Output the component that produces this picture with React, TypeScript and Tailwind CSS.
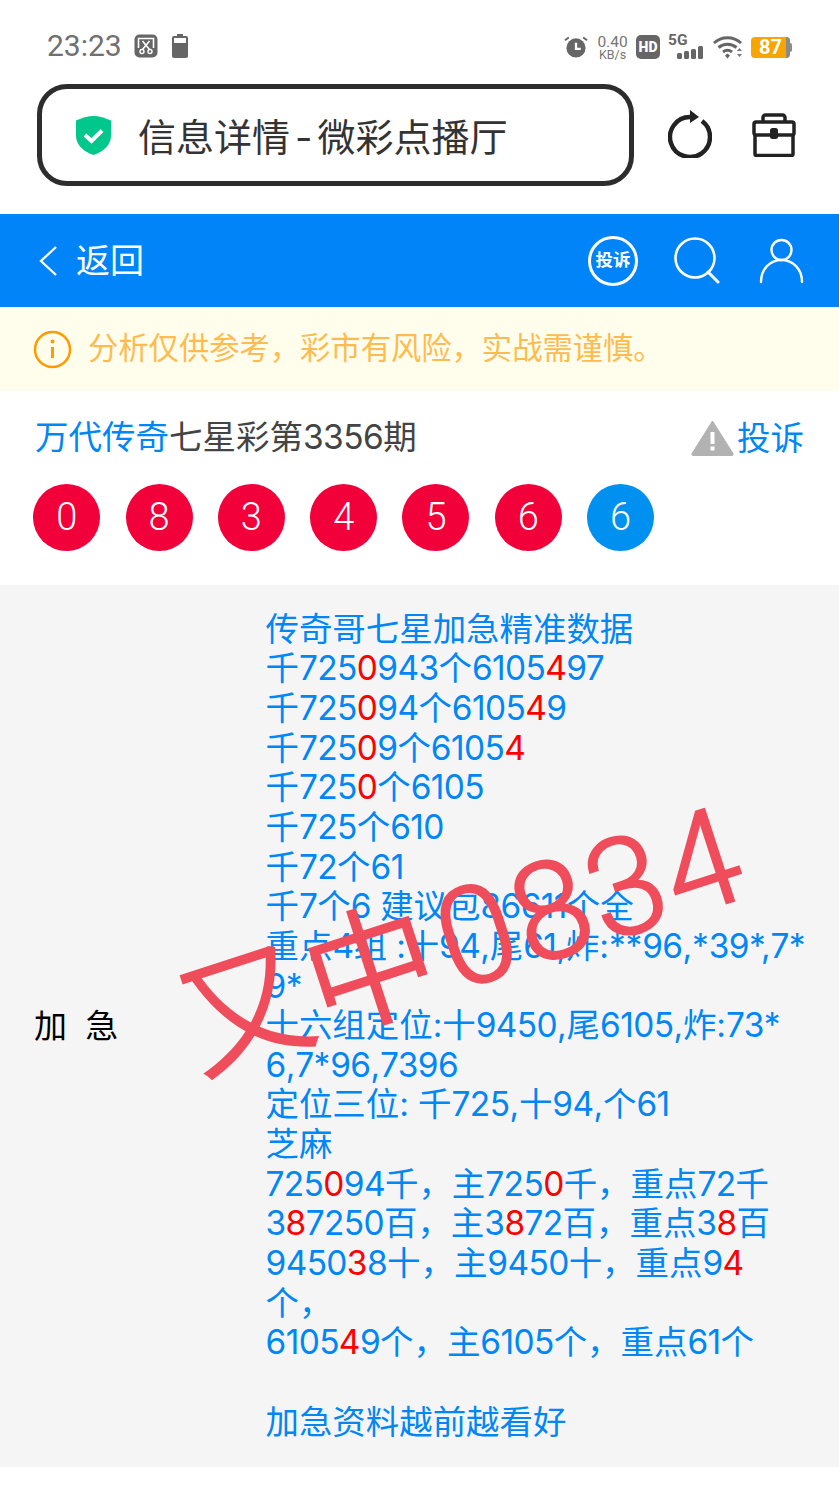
import React from "react";

const stack = "font-['Roboto','Noto_Sans_CJK_SC',sans-serif]";

function T({ s }: { s: string }) {
  const parts = s.split(/(\[[^\]]\]|[0-9]+|[:,*. ]+)/).filter(Boolean);
  return (
    <>
      {parts.map((p, i) =>
        p.startsWith("[") ? (
          <span key={i} className="font-['Inter',sans-serif] leading-none tracking-[-0.6px] text-[#ff0000]">{p[1]}</span>
        ) : /^[0-9]+$/.test(p) ? (
          <span key={i} className="font-['Inter',sans-serif] leading-none tracking-[-0.6px]">{p}</span>
        ) : /^[:,*. ]+$/.test(p) ? (
          <span key={i} className="font-['Inter',sans-serif] leading-none tracking-[-0.1px]">{p}</span>
        ) : (
          <span key={i}>{p}</span>
        )
      )}
    </>
  );
}

function Ball({ n, blue }: { n: string; blue?: boolean }) {
  return (
    <div className={`w-[67px] h-[67px] rounded-full flex items-center justify-center text-white text-[38px] font-light ${blue ? "bg-[#0091f0]" : "bg-[#f20039]"}`}>
      {n}
    </div>
  );
}

const lines = [
  "传奇哥七星加急精准数据",
  "千725[0]943个6105[4]97",
  "千725[0]94个6105[4]9",
  "千725[0]9个6105[4]",
  "千725[0]个6105",
  "千725个610",
  "千72个61",
  "千7个6 建议包86611个全",
  "重点4组 :十94,尾61,炸:**96,*39*,7*",
  "9*",
  "十六组定位:十9450,尾6105,炸:73*",
  "6,7*96,7396",
  "定位三位: 千725,十94,个61",
  "芝麻",
  "725[0]94千，主725[0]千，重点72千",
  "3[8]7250百，主3[8]72百，重点3[8]百",
  "9450[3]8十，主9450十，重点9[4]",
  "个，",
  "6105[4]9个，主6105个，重点61个",
  "",
  "加急资料越前越看好",
];

export default function App() {
  return (
    <div className={`relative w-[839px] h-[1500px] bg-white overflow-hidden ${stack}`}>
      {/* status bar */}
      <div className="h-[84px] flex items-start justify-between pl-[47px] pr-[47px] pt-[27px]">
        <div className="flex items-center h-[38px] text-[#707070]">
          <span className="text-[30px] leading-none">23:23</span>
          <svg className="ml-[12px]" width="24" height="24" viewBox="0 0 24 24">
            <rect x="0.5" y="0.5" width="23" height="23" rx="5" fill="#666" />
            <path d="M4.500 14V4.500h15V14" fill="none" stroke="#fff" strokeWidth="1.600" />
            <path d="M8.500 7l7 8.500M15.500 7l-7 8.500" stroke="#fff" strokeWidth="1.600" />
            <circle cx="8" cy="17.500" r="2" fill="#666" stroke="#fff" strokeWidth="1.400" />
            <circle cx="16" cy="17.500" r="2" fill="#666" stroke="#fff" strokeWidth="1.400" />
          </svg>
          <svg className="ml-[14px]" width="16" height="24" viewBox="0 0 16 24">
            <path d="M5 0h6v2h3a2 2 0 0 1 2 2v18a2 2 0 0 1-2 2H2a2 2 0 0 1-2-2V4a2 2 0 0 1 2-2h3z" fill="#666" />
            <rect x="2" y="4" width="12" height="5" fill="#fff" />
          </svg>
        </div>
        <div className="flex items-center h-[38px] mt-[1px]">
          <svg width="24" height="24" viewBox="0 0 25 24">
            <circle cx="12.500" cy="13" r="10" fill="#666" />
            <path d="M12.500 7.500V14h5" fill="none" stroke="#fff" strokeWidth="2.400" />
            <path d="M1 5l4-3M24 5l-4-3" stroke="#666" strokeWidth="2" />
          </svg>
          <div className="ml-[9px] w-[31px] flex flex-col items-center text-[#757575]">
            <span className="text-[15.500px] leading-[14px]">0.40</span>
            <span className="text-[12.500px] leading-[11px]">KB/s</span>
          </div>
          <div className="ml-[8px] w-[24px] h-[24px] rounded-[5px] bg-[#666] text-white text-[14px] font-black flex items-center justify-center leading-none">HD</div>
          <div className="ml-[8px] w-[35px] h-[24px] relative">
            <span className="absolute left-0 top-[-2px] text-[15.500px] font-bold text-[#666] leading-none">5G</span>
            <div className="absolute right-0 bottom-0 flex items-end gap-[2px]">
              <div className="w-[5px] h-[6px] rounded-[1.500px] bg-[#666]" />
              <div className="w-[5px] h-[8px] rounded-[1.500px] bg-[#666]" />
              <div className="w-[5px] h-[10px] rounded-[1.500px] bg-[#666]" />
              <div className="w-[5px] h-[13px] rounded-[1.500px] bg-[#666]" />
            </div>
          </div>
          <svg className="ml-[10px]" width="30" height="24" viewBox="0 0 30 24">
            <path d="M1 8a20 20 0 0 1 27 0M5.500 12.500a14 14 0 0 1 18 0M10 17a7.500 7.500 0 0 1 9 0" fill="none" stroke="#666" strokeWidth="3" />
            <path d="M12 20.500l2.500-2 2.500 2-2.500 3z" fill="#666" />
            <path d="M24 16l2.500-3 2.500 3zM24 19l2.500 3 2.500-3z" fill="#777" />
          </svg>
          <div className="ml-[8px] flex items-center">
            <div className="relative w-[39px] h-[21px] rounded-[4px] bg-[#f7a600] overflow-hidden flex items-center text-white text-[20px] font-bold leading-none pl-[8px]">
              <span>87</span>
              <div className="absolute right-0 top-0 bottom-0 w-[4px] bg-[#8a8a8a]" />
            </div>
            <div className="w-[2px] h-[9px] bg-[#8a8a8a] rounded-r-[2px]" />
          </div>
        </div>
      </div>

      {/* browser bar */}
      <div className="h-[130px] flex items-start">
        <div className="ml-[37px] w-[597px] h-[102px] border-[5px] border-[#2d2d2d] rounded-[30px] flex items-center pl-[33px]">
          <svg width="37" height="39" viewBox="0 0 37 39">
            <path d="M18.500 0C24 0 30 2 36 4.500V20c0 9-8 16-17.500 19C9 36 1 29 1 20V4.500C7 2 13 0 18.500 0z" fill="#00c78b" />
            <path d="M10 19l6.500 6L27 14.500" fill="none" stroke="#fff" strokeWidth="4" />
          </svg>
          <span className="ml-[26px] mt-[5px] text-[38px] leading-none text-[#333] whitespace-nowrap">
            信息详情<span className="mx-[5px] font-['Inter',sans-serif]">-</span>微彩点播厅
          </span>
        </div>
        <svg className="ml-[34px] mt-[26px]" width="44" height="48" viewBox="0 0 44 48">
          <path d="M22 7A20 20 0 1 0 34 11" fill="none" stroke="#222" strokeWidth="4.500" />
          <path d="M22 0l9 7-9 6z" fill="#222" />
        </svg>
        <svg className="ml-[40px] mt-[29px]" width="44" height="44" viewBox="0 0 44 44">
          <path d="M11 8V4.500A2.500 2.500 0 0 1 13.500 2h17A2.500 2.500 0 0 1 33 4.500V8" fill="none" stroke="#222" strokeWidth="3.500" />
          <path d="M3 22V41a1.500 1.500 0 0 0 1.500 1.500h35A1.500 1.500 0 0 0 41 41V22" fill="none" stroke="#222" strokeWidth="3.500" />
          <rect x="2" y="9" width="40" height="13" rx="2" fill="none" stroke="#222" strokeWidth="3.500" />
          <rect x="18" y="15" width="8" height="11" rx="2.500" fill="#222" />
        </svg>
      </div>

      {/* blue bar */}
      <div className="h-[93px] bg-[#0084f8] flex items-center text-white">
        <svg className="ml-[38px]" width="20" height="32" viewBox="0 0 20 32">
          <path d="M18 2L3 16l15 14" fill="none" stroke="#fff" strokeWidth="2.300" />
        </svg>
        <span className="ml-[18px] text-[34px] leading-none">返回</span>
        <div className="ml-auto w-[50px] h-[50px] rounded-full border-[3px] border-white flex items-center justify-center text-[17.500px] font-bold leading-none whitespace-nowrap">投诉</div>
        <svg className="ml-[35px]" width="47" height="48" viewBox="0 0 47 48">
          <circle cx="22" cy="21" r="19.500" fill="none" stroke="#fff" strokeWidth="2.600" />
          <path d="M35 35l10 10" stroke="#fff" strokeWidth="3" strokeLinecap="round" />
        </svg>
        <svg className="ml-[39px] mr-[35px]" width="45" height="46" viewBox="0 0 45 46">
          <circle cx="22.500" cy="12" r="10" fill="none" stroke="#fff" strokeWidth="2.400" />
          <path d="M2 44c0-13 9-22 20.500-22S43 31 43 44" fill="none" stroke="#fff" strokeWidth="2.400" strokeLinecap="round" />
        </svg>
      </div>

      {/* notice */}
      <div className="h-[84px] bg-[#fffeec] flex items-center pl-[33px]">
        <svg width="39" height="39" viewBox="0 0 39 39">
          <circle cx="19.500" cy="19.500" r="17.500" fill="none" stroke="#ff9a00" strokeWidth="2.500" />
          <circle cx="19.500" cy="11.500" r="2" fill="#ff9a00" />
          <path d="M19.500 17v11" stroke="#ff9a00" strokeWidth="3" />
        </svg>
        <span className="ml-[16px] text-[30.300px] leading-none text-[#ffbb4f]">分析仅供参考，彩市有风险，实战需谨慎。</span>
      </div>

      {/* title */}
      <div className="h-[194px] pt-[24px]">
        <div className="flex items-center h-[46px] pl-[35px] pr-[35px]">
          <span className="text-[33.500px] leading-none text-[#0087f5]">万代传奇</span>
          <span className="text-[33.500px] leading-none text-[#444]"><T s="七星彩第3356期" /></span>
          <svg className="ml-auto mt-[-1px]" width="43" height="36" viewBox="0 0 43 36">
            <path d="M21.500 1L42 33.500a1.500 1.500 0 0 1-1 2H2a1.500 1.500 0 0 1-1-2z" fill="#b2b2b2" stroke="#b2b2b2" strokeLinejoin="round" />
            <rect x="19.500" y="12" width="4" height="12" fill="#fff" />
            <rect x="19.500" y="26.500" width="4" height="4" fill="#fff" />
          </svg>
          <span className="ml-[3px] mt-[2px] text-[33.500px] leading-none text-[#0087f5]">投诉</span>
        </div>
        <div className="mt-[23px] pl-[33.300px] flex gap-[25.300px]">
          {["0", "8", "3", "4", "5", "6"].map((n, i) => <Ball key={i} n={n} />)}
          <Ball n="6" blue />
        </div>
      </div>

      {/* detail */}
      <div className="h-[882px] bg-[#f5f5f5] flex items-center">
        <div className="w-[265.500px] pl-[34px] text-[33px] text-black whitespace-pre leading-none [word-spacing:1px]">加  急</div>
        <div className="w-[560px] text-[33.450px] leading-[39.650px] text-[#0087f5] whitespace-pre">
          {lines.map((l, i) => (
            <div key={i} className="h-[39.650px]"><T s={l} /></div>
          ))}
        </div>
      </div>

      {/* stamp */}
      <div className="absolute left-[170px] top-[873px] -rotate-[18deg] leading-none text-[#f04d5c] whitespace-nowrap">
        <span className="text-[131px]">又中</span>
        <span className="ml-[8px] text-[136px] tracking-[3px] font-light [-webkit-text-stroke:2px_#f04d5c]">0834</span>
      </div>
    </div>
  );
}
